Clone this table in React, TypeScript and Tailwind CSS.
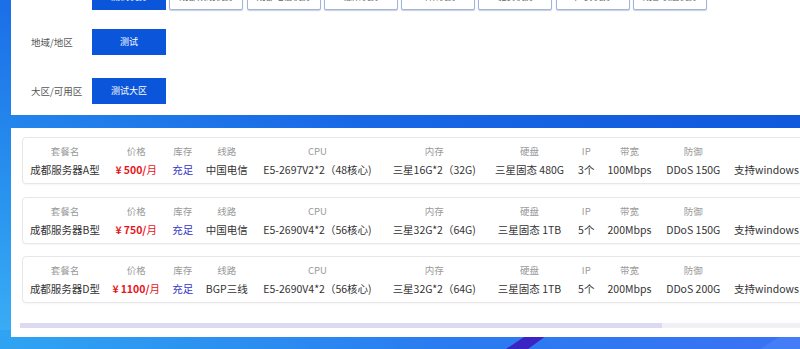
import React from 'react';

interface Plan {
  name: string;
  price: string;
  stock: string;
  line: string;
  cpu: string;
  ram: string;
  disk: string;
  ip: string;
  bandwidth: string;
  ddos: string;
  os: string;
}

const plans: Plan[] = [
  {
    name: '成都服务器A型',
    price: '500',
    stock: '充足',
    line: '中国电信',
    cpu: 'E5-2697V2*2（48核心)',
    ram: '三星16G*2（32G)',
    disk: '三星固态 480G',
    ip: '3个',
    bandwidth: '100Mbps',
    ddos: 'DDoS 150G',
    os: '支持windows',
  },
  {
    name: '成都服务器B型',
    price: '750',
    stock: '充足',
    line: '中国电信',
    cpu: 'E5-2690V4*2（56核心)',
    ram: '三星32G*2（64G)',
    disk: '三星固态 1TB',
    ip: '5个',
    bandwidth: '200Mbps',
    ddos: 'DDoS 150G',
    os: '支持windows',
  },
  {
    name: '成都服务器D型',
    price: '1100',
    stock: '充足',
    line: 'BGP三线',
    cpu: 'E5-2690V4*2（56核心)',
    ram: '三星32G*2（64G)',
    disk: '三星固态 1TB',
    ip: '5个',
    bandwidth: '200Mbps',
    ddos: 'DDoS 200G',
    os: '支持windows',
  },
];

const topOptions = ['测试机房', '成都双线机房', '成都电信机房', '德阳机房', '绵阳机房', '雅安机房', '广安机房', '成都联通机房'];

const Col: React.FC<{ w: string; label: string; children: React.ReactNode }> = ({ w, label, children }) => (
  <div className={`${w} shrink-0 flex flex-col items-center pt-[6px]`}>
    <div className="h-[14px] leading-[14px] text-[9.5px] text-[#9a9a9a] whitespace-nowrap">{label}</div>
    <div className="mt-[4px] h-[16px] leading-[16px] text-[10.5px] text-[#333] whitespace-nowrap">{children}</div>
  </div>
);

const PlanCard: React.FC<{ plan: Plan }> = ({ plan }) => (
  <div className="w-[900px] h-[47px] shrink-0 flex border border-[#e7e7e7] rounded-[4px] bg-white shadow-[0_1px_2px_rgba(0,0,0,0.04)]">
    <Col w="w-[84px]" label="套餐名">{plan.name}</Col>
    <Col w="w-[58.5px]" label="价格">
      <span className="text-[#e8141c] font-bold">
        <span className="mr-[2px]">¥</span>{plan.price}/<span className="font-normal">月</span>
      </span>
    </Col>
    <Col w="w-[34.5px]" label="库存">
      <span className="text-[#3434c8]">{plan.stock}</span>
    </Col>
    <Col w="w-[53.5px]" label="线路">{plan.line}</Col>
    <Col w="w-[128px]" label="CPU">{plan.cpu}</Col>
    <Col w="w-[105.5px]" label="内存">{plan.ram}</Col>
    <Col w="w-[85px]" label="硬盘">{plan.disk}</Col>
    <Col w="w-[28.5px]" label="IP">{plan.ip}</Col>
    <Col w="w-[58px]" label="带宽">{plan.bandwidth}</Col>
    <Col w="w-[69.5px]" label="防御">{plan.ddos}</Col>
    <div className="flex flex-col pt-[6px] pl-[6px]">
      <div className="h-[14px]" />
      <div className="mt-[4px] h-[16px] leading-[16px] text-[10.5px] text-[#333] whitespace-nowrap">{plan.os}</div>
    </div>
  </div>
);

const Wallpaper = () => (
  <svg className="absolute inset-0" width="800" height="349" viewBox="0 0 800 349">
    <defs>
      <linearGradient id="wp" x1="1" y1="0" x2="0" y2="1">
        <stop offset="0" stopColor="#0a4fd6" />
        <stop offset="0.45" stopColor="#1868e6" />
        <stop offset="0.8" stopColor="#2a96ef" />
        <stop offset="1" stopColor="#3cb0f6" />
      </linearGradient>
      <linearGradient id="wp2" x1="0" y1="0" x2="1" y2="0">
        <stop offset="0" stopColor="#2fa4f2" />
        <stop offset="0.55" stopColor="#2a7cf0" />
        <stop offset="1" stopColor="#3a72f4" />
      </linearGradient>
    </defs>
    <rect width="800" height="349" fill="url(#wp)" />
    <rect y="330" width="800" height="19" fill="url(#wp2)" />
    <polygon points="506,349 528,349 550,333 530,333" fill="#3a25c4" />
    <polygon points="760,349 800,349 800,330 790,330" fill="#4d86f7" opacity="0.6" />
  </svg>
);

export default function App() {
  return (
    <div
      className="relative w-[800px] h-[349px] overflow-hidden"
      style={{ fontFamily: '"Noto Sans CJK SC", "Noto Sans", sans-serif' }}
    >
      <Wallpaper />
      <div className="relative pl-[11px]">
        {/* filter panel */}
        <div className="h-[115px] bg-white overflow-hidden">
          <div className="flex flex-col mt-[-16px]">
            <div className="flex items-center">
              <div className="w-[81px] shrink-0" />
              <div className="flex gap-[3.3px]">
                {topOptions.map((o, i) => (
                  <div
                    key={o}
                    className={
                      i === 0
                        ? 'w-[74px] h-[26px] shrink-0 flex items-center justify-center bg-[#0a55d9] text-white text-[9px]'
                        : 'w-[74px] h-[26px] shrink-0 flex items-center justify-center bg-white border border-[#a3b5dc] rounded-[2px] shadow-[0_1px_1px_rgba(30,60,140,0.25)] text-[#666] text-[9px]'
                    }
                  >
                    {o}
                  </div>
                ))}
              </div>
            </div>
            <div className="flex items-center mt-[19px]">
              <div className="w-[81px] shrink-0 pl-[20px] text-[9.5px] text-[#555] pt-[1px]">地域/地区</div>
              <div className="w-[74px] h-[26px] flex items-center justify-center bg-[#0a55d9] text-white text-[9px]">测试</div>
            </div>
            <div className="flex items-center mt-[23px]">
              <div className="w-[81px] shrink-0 pl-[20px] text-[9.5px] text-[#555] pt-[1px]">大区/可用区</div>
              <div className="w-[74px] h-[26px] flex items-center justify-center bg-[#0a55d9] text-white text-[9px]">测试大区</div>
            </div>
          </div>
        </div>

        {/* plan list */}
        <div className="mt-[13px] h-[209px] bg-white overflow-hidden pt-[9px] pl-[11px]">
          <div className="flex flex-col gap-[12.5px]">
            {plans.map((p) => (
              <PlanCard key={p.name} plan={p} />
            ))}
          </div>
          <div className="mt-[20px] ml-[-2px] h-[5px] bg-[#f1f1f5] flex">
            <div className="w-[642px] h-full bg-[#dcdaf2]" />
          </div>
        </div>
      </div>
    </div>
  );
}
